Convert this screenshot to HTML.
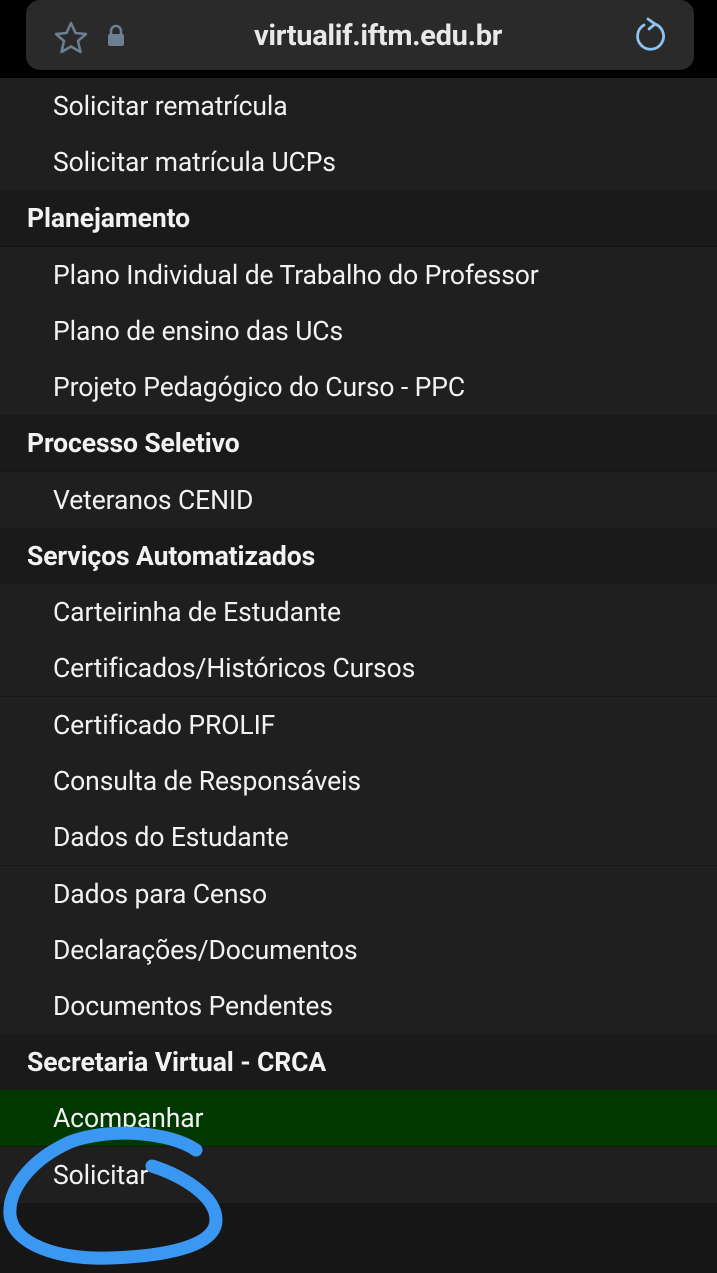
<!DOCTYPE html>
<html><head><meta charset="utf-8"><style>
*{margin:0;padding:0;box-sizing:border-box}
body{width:717px;height:1273px;background:#161616;font-family:"Roboto","Liberation Sans",sans-serif;color:#f2f2f2;overflow:hidden;position:relative}
.top{position:absolute;left:0;top:0;width:717px;height:78px;background:#000}
.pill{position:absolute;left:26px;top:0;width:668px;height:70px;background:#2a2a2a;border-radius:14px}
.url{position:absolute;left:18px;width:100%;top:19px;text-align:center;font-size:29px;font-weight:bold;color:#e8e8e8;letter-spacing:-0.3px}
.row{position:absolute;left:0;width:717px;height:56.3px;line-height:58px;font-size:26.5px;letter-spacing:-0.1px}
.it{padding-left:53px;background:#1f1f1f}
.hd{padding-left:27px;background:#1a1a1a;font-weight:bold}
</style></head><body>
<div class="top"><div class="pill">
<svg style="position:absolute;left:26px;top:20px" width="38" height="36" viewBox="0 0 38 36"><path d="M19 3 L23.5 13 L34 14 L26 21 L28.5 32 L19 26.5 L9.5 32 L12 21 L4 14 L14.5 13 Z" fill="none" stroke="#6d7f93" stroke-width="2.5" stroke-linejoin="round"/></svg>
<svg style="position:absolute;left:80px;top:24px" width="20" height="24" viewBox="0 0 20 24"><path d="M5 10 V7 a5 5 0 0 1 10 0 V10" fill="none" stroke="#6d7f93" stroke-width="2.5"/><rect x="2" y="10" width="16" height="12" rx="2" fill="#6d7f93"/></svg>
<div class="url">virtualif.iftm.edu.br</div>
<svg style="position:absolute;left:604px;top:16px" width="40" height="40" viewBox="0 0 40 40"><path d="M14 9 A13 13 0 1 0 25 8" fill="none" stroke="#8cc3f0" stroke-width="2.8" stroke-linecap="round"/><path d="M18 3 L25 8 L19 13" fill="none" stroke="#8cc3f0" stroke-width="2.8" stroke-linecap="round" stroke-linejoin="round"/></svg>
</div></div>
<div class="row it" style="top:78px">Solicitar rematrícula</div>
<div class="row it" style="top:134px">Solicitar matrícula UCPs</div>
<div class="row hd" style="top:190px">Planejamento</div>
<div class="row it" style="top:247px">Plano Individual de Trabalho do Professor</div>
<div class="row it" style="top:303px">Plano de ensino das UCs</div>
<div class="row it" style="top:359px">Projeto Pedagógico do Curso - PPC</div>
<div class="row hd" style="top:415px">Processo Seletivo</div>
<div class="row it" style="top:472px">Veteranos CENID</div>
<div class="row hd" style="top:528px">Serviços Automatizados</div>
<div class="row it" style="top:584px">Carteirinha de Estudante</div>
<div class="row it" style="top:640px">Certificados/Históricos Cursos</div>
<div class="row it" style="top:697px">Certificado PROLIF</div>
<div class="row it" style="top:753px">Consulta de Responsáveis</div>
<div class="row it" style="top:809px">Dados do Estudante</div>
<div class="row it" style="top:866px">Dados para Censo</div>
<div class="row it" style="top:922px">Declarações/Documentos</div>
<div class="row it" style="top:978px">Documentos Pendentes</div>
<div class="row hd" style="top:1034px">Secretaria Virtual - CRCA</div>
<div class="row it" style="top:1090px;background:#003800">Acompanhar</div>
<div class="row it" style="top:1147px">Solicitar</div>
<svg style="position:absolute;left:0;top:0" width="717" height="1273" viewBox="0 0 717 1273"><path d="M196 1150 C170 1132 110 1127 70 1142 C30 1160 8 1190 10 1215 C13 1245 60 1260 110 1258 C170 1256 216 1245 216 1220 C216 1195 180 1175 152 1166" fill="none" stroke="#3a98f2" stroke-width="13" stroke-linecap="round" stroke-linejoin="round"/></svg>
</body></html>
